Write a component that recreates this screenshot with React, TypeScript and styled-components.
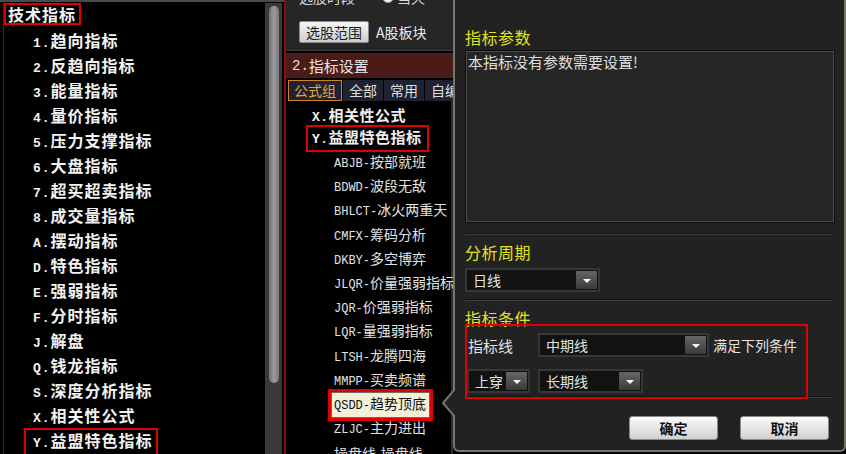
import React from "react";
import styled, { createGlobalStyle } from "styled-components";

const GlobalStyle = createGlobalStyle`
  html, body { margin: 0; padding: 0; background: #000; }
  body {
    width: 846px; height: 454px; overflow: hidden;
    font-family: "Noto Sans CJK SC", "Noto Sans", sans-serif;
  }
  #root { width: 846px; height: 454px; }
  * { box-sizing: border-box; }
`;

const Screen = styled.div`
  display: flex;
  width: 846px;
  height: 454px;
  overflow: hidden;
  background: #000;
`;

const Code = styled.span<{ $size?: number; $bold?: boolean }>`
  font-family: "Liberation Mono", monospace;
  font-size: ${(p) => p.$size ?? 12}px;
  font-weight: ${(p) => (p.$bold ? 700 : 400)};
`;

/* ---------------- Left panel ---------------- */
const LeftPanel = styled.div`
  width: 284px;
  flex: none;
  display: flex;
  flex-direction: column;
  background: #000;
`;

const TopStrip = styled.div`
  height: 2px;
  flex: none;
  background: #4a4a4a;
`;

const LeftBody = styled.div`
  flex: 1;
  min-height: 0;
  display: flex;
  padding: 0 2px 0 3px;
`;

const TreeColumn = styled.div`
  flex: 1;
  display: flex;
  flex-direction: column;
  border-left: 1px solid #7a0808;
`;

const TreeHeader = styled.div`
  align-self: flex-start;
  margin-top: 1px;
  border: 2px solid #e00000;
  padding: 0 3px 0 2px;
  line-height: 18px;
  font-size: 16px;
  font-weight: 700;
  letter-spacing: 1px;
  color: #f2f2f2;
  white-space: nowrap;
`;

const TreeList = styled.div`
  margin-top: 4.5px;
  display: flex;
  flex-direction: column;
`;

const TreeRow = styled.div`
  height: 25px;
  flex: none;
  display: flex;
  align-items: center;
  padding-left: 20px;
`;

const TreeLabel = styled.span<{ $boxed?: boolean }>`
  border: 2px solid ${(p) => (p.$boxed ? "#e00000" : "transparent")};
  padding: 0 3px 0 7px;
  line-height: 20px;
  font-size: 16px;
  font-weight: 700;
  letter-spacing: 1px;
  color: #f2f2f2;
  white-space: nowrap;
`;

const ScrollTrack = styled.div`
  width: 17px;
  flex: none;
  margin-top: 1px;
  padding-top: 3px;
  background: #3a3a3a;
  display: flex;
  justify-content: center;
`;

const ScrollThumb = styled.div`
  width: 10px;
  height: 377px;
  border-radius: 5px;
  background: linear-gradient(90deg, #6f6f6f, #9c9c9c 50%, #777);
`;

/* ---------------- Middle panel ---------------- */
const MiddlePanel = styled.div`
  width: 169px;
  flex: none;
  display: flex;
  flex-direction: column;
  border-left: 2px solid #8a0c0c;
  overflow: hidden;
  background: #000;
`;

const MidTop = styled.div`
  height: 51px;
  flex: none;
  background: #262626;
  border-bottom: 1px solid #3a3a3a;
  padding-left: 13px;
  display: flex;
  flex-direction: column;
  overflow: hidden;
`;

const CutRow = styled.div`
  margin-top: -11px;
  height: 16px;
  flex: none;
  display: flex;
  align-items: center;
  font-size: 14px;
  line-height: 16px;
  color: #dcdcdc;
  white-space: nowrap;
`;

const Radio = styled.span`
  width: 12px;
  height: 12px;
  border-radius: 50%;
  background: #f4f4f4;
  border: 1px solid #999;
  margin: 0 3px 0 27px;
  flex: none;
`;

const ButtonRow = styled.div`
  margin-top: 16px;
  display: flex;
  align-items: center;
`;

const LightButton = styled.button`
  height: 22px;
  padding: 0 6px;
  border: 1px solid #8a8a8a;
  border-radius: 2px;
  background: linear-gradient(#f6f6f6, #cdcdcd);
  color: #1a1a1a;
  font-family: inherit;
  font-size: 14px;
  line-height: 20px;
`;

const PlainText = styled.span`
  margin-left: 7px;
  font-size: 14px;
  color: #ededed;
  white-space: nowrap;
`;

const SectionBand = styled.div`
  margin-top: 2px;
  height: 25px;
  flex: none;
  background: #4b1c17;
  padding-left: 6px;
  display: flex;
  align-items: center;
  font-size: 15px;
  color: #e6e6e6;
  white-space: nowrap;
`;

const Tabs = styled.div`
  margin-top: 2px;
  display: flex;
  gap: 1px;
  padding-left: 2px;
  flex: none;
`;

const Tab = styled.div<{ $active?: boolean }>`
  height: 21px;
  flex: none;
  padding: 0 5px;
  border: 1px solid ${(p) => (p.$active ? "#d2821e" : "transparent")};
  background: #1e2231;
  color: ${(p) => (p.$active ? "#f0a030" : "#dedede")};
  font-size: 14px;
  line-height: 19px;
  white-space: nowrap;
`;

const FormulaList = styled.div`
  flex: 1;
  padding-top: 4px;
  display: flex;
  flex-direction: column;
  border-right: 2px solid #2e2e2e;
`;

const GroupRow = styled.div`
  height: 22px;
  flex: none;
  display: flex;
  align-items: center;
  padding-left: 20px;
`;

const GroupLabel = styled.span<{ $boxed?: boolean }>`
  border: 2px solid ${(p) => (p.$boxed ? "#e00000" : "transparent")};
  padding: 0 5px 0 4px;
  line-height: 20px;
  font-size: 15px;
  font-weight: 700;
  letter-spacing: 0.5px;
  color: #f0f0f0;
  white-space: nowrap;
`;

const SubList = styled.div`
  margin-top: 2px;
  display: flex;
  flex-direction: column;
`;

const SubRow = styled.div`
  height: 24.2px;
  flex: none;
  display: flex;
  align-items: center;
  padding-left: 42px;
`;

const SubLabel = styled.span<{ $selected?: boolean }>`
  border: 3px solid ${(p) => (p.$selected ? "#e00000" : "transparent")};
  padding: 0 4px 0 3px;
  line-height: 23px;
  font-size: 14px;
  white-space: nowrap;
  color: ${(p) => (p.$selected ? "#111" : "#e2e2e2")};
  background: ${(p) => (p.$selected ? "#f3f0da" : "transparent")};
  box-shadow: ${(p) => (p.$selected ? "inset 0 0 0 1px #6a6a6a" : "none")};
`;

/* ---------------- Dialog ---------------- */
const Dialog = styled.div`
  position: relative;
  width: 393px;
  height: 452px;
  flex: none;
  background: #222;
  border: 2px solid #7b7468;
  border-top: none;
  border-radius: 0 0 6px 6px;
  padding: 0 9px 0 10px;
  display: flex;
  flex-direction: column;
`;

const Pointer = styled.svg`
  position: absolute;
  left: -14px;
  top: 389px;
`;

const DialogTitle = styled.div<{ $top: number }>`
  margin-top: ${(p) => p.$top}px;
  line-height: 20px;
  font-size: 16px;
  letter-spacing: 0.5px;
  color: #e6e31e;
  white-space: nowrap;
`;

const ParamBox = styled.div`
  margin-top: 3px;
  height: 173px;
  border: 1px solid #0e0e0e;
  box-shadow: inset 0 0 0 1px #4a4a4a;
  background: #262626;
  padding: 2px 2px;
  font-size: 15px;
  line-height: 18px;
  color: #dedede;
`;

const Divider = styled.div<{ $top: number }>`
  margin-top: ${(p) => p.$top}px;
  margin-right: 3px;
  height: 2px;
  flex: none;
  border-top: 1px solid #141414;
  border-bottom: 1px solid #3b3b3b;
`;

const Select = styled.div<{ $w: number; $top?: number }>`
  width: ${(p) => p.$w}px;
  height: 24px;
  flex: none;
  margin-top: ${(p) => p.$top ?? 0}px;
  display: flex;
  align-items: center;
  border: 2px solid #363636;
  background: #121212;
  padding: 0 1px 0 6px;
`;

const SelectValue = styled.span`
  flex: 1;
  font-size: 14px;
  color: #e2e2e2;
  white-space: nowrap;
`;

const SelectArrow = styled.span`
  width: 21px;
  height: 18px;
  flex: none;
  border-radius: 1px;
  background: linear-gradient(#666, #3a3a3a);
  display: flex;
  align-items: center;
  justify-content: center;
  &::after {
    content: "";
    margin-top: 2px;
    border-left: 4px solid transparent;
    border-right: 4px solid transparent;
    border-top: 4px solid #fff;
  }
`;

const CondBox = styled.div`
  position: relative;
  z-index: 1;
  margin-top: -4px;
  width: 343px;
  height: 75px;
  flex: none;
  border: 2px solid #e00000;
  padding-top: 7px;
  display: flex;
  flex-direction: column;
`;

const CondRow = styled.div<{ $top?: number }>`
  margin-top: ${(p) => p.$top ?? 0}px;
  display: flex;
  align-items: center;
  gap: 8px;
`;

const CondLabel = styled.span`
  width: 63px;
  padding-left: 1px;
  font-size: 15px;
  color: #e2e2e2;
  white-space: nowrap;
`;

const CondText = styled.span`
  margin-left: -4px;
  font-size: 14px;
  color: #e2e2e2;
  white-space: nowrap;
`;

const Actions = styled.div`
  margin-top: 18px;
  margin-right: 6px;
  display: flex;
  justify-content: flex-end;
  gap: 22px;
`;

const ActionButton = styled.button`
  width: 89px;
  height: 24px;
  border: 1px solid #8a8a8a;
  border-radius: 3px;
  background: linear-gradient(#fbfbfb, #d0d0d0);
  color: #111;
  font-family: inherit;
  font-size: 14px;
  font-weight: 700;
  line-height: 20px;
`;

const Dropdown = ({ w, value, top }: { w: number; value: string; top?: number }) => (
  <Select $w={w} $top={top}>
    <SelectValue>{value}</SelectValue>
    <SelectArrow />
  </Select>
);

const leftItems: [string, string][] = [
  ["1.", "趋向指标"],
  ["2.", "反趋向指标"],
  ["3.", "能量指标"],
  ["4.", "量价指标"],
  ["5.", "压力支撑指标"],
  ["6.", "大盘指标"],
  ["7.", "超买超卖指标"],
  ["8.", "成交量指标"],
  ["A.", "摆动指标"],
  ["D.", "特色指标"],
  ["E.", "强弱指标"],
  ["F.", "分时指标"],
  ["J.", "解盘"],
  ["Q.", "钱龙指标"],
  ["S.", "深度分析指标"],
  ["X.", "相关性公式"],
  ["Y.", "益盟特色指标"],
];

const subItems: [string, string][] = [
  ["ABJB-", "按部就班"],
  ["BDWD-", "波段无敌"],
  ["BHLCT-", "冰火两重天"],
  ["CMFX-", "筹码分析"],
  ["DKBY-", "多空博弈"],
  ["JLQR-", "价量强弱指标"],
  ["JQR-", "价强弱指标"],
  ["LQR-", "量强弱指标"],
  ["LTSH-", "龙腾四海"],
  ["MMPP-", "买卖频谱"],
  ["QSDD-", "趋势顶底"],
  ["ZLJC-", "主力进出"],
  ["", "操盘线-操盘线"],
];

export default function App() {
  return (
    <>
      <GlobalStyle />
      <Screen>
        <LeftPanel>
          <TopStrip />
          <LeftBody>
            <TreeColumn>
              <TreeHeader>技术指标</TreeHeader>
              <TreeList>
                {leftItems.map(([code, name]) => (
                  <TreeRow key={code}>
                    <TreeLabel $boxed={code === "Y."}>
                      <Code $size={13} $bold>
                        {code}
                      </Code>
                      {name}
                    </TreeLabel>
                  </TreeRow>
                ))}
              </TreeList>
            </TreeColumn>
            <ScrollTrack>
              <ScrollThumb />
            </ScrollTrack>
          </LeftBody>
        </LeftPanel>

        <MiddlePanel>
          <MidTop>
            <CutRow>
              选股时段
              <Radio />
              当天
              <Radio />
            </CutRow>
            <ButtonRow>
              <LightButton>选股范围</LightButton>
              <PlainText>A股板块</PlainText>
            </ButtonRow>
          </MidTop>
          <SectionBand>
            <Code $size={14}>2.</Code>指标设置
          </SectionBand>
          <Tabs>
            <Tab $active>公式组</Tab>
            <Tab>全部</Tab>
            <Tab>常用</Tab>
            <Tab>自编</Tab>
          </Tabs>
          <FormulaList>
            <GroupRow>
              <GroupLabel>
                <Code $size={13} $bold>
                  X.
                </Code>
                相关性公式
              </GroupLabel>
            </GroupRow>
            <GroupRow>
              <GroupLabel $boxed>
                <Code $size={13} $bold>
                  Y.
                </Code>
                益盟特色指标
              </GroupLabel>
            </GroupRow>
            <SubList>
              {subItems.map(([code, name]) => (
                <SubRow key={code + name}>
                  <SubLabel $selected={code === "QSDD-"}>
                    {code && <Code>{code}</Code>}
                    {name}
                  </SubLabel>
                </SubRow>
              ))}
            </SubList>
          </FormulaList>
        </MiddlePanel>

        <Dialog>
          <Pointer width="14" height="28" viewBox="0 0 14 28">
            <polygon points="14,0 2,14 14,28" fill="#222" />
            <polyline points="14,0 2,14 14,28" fill="none" stroke="#7b7468" strokeWidth="2" />
          </Pointer>
          <DialogTitle $top={27}>指标参数</DialogTitle>
          <ParamBox>本指标没有参数需要设置!</ParamBox>
          <Divider $top={10} />
          <DialogTitle $top={7}>分析周期</DialogTitle>
          <Dropdown w={135} value="日线" top={6} />
          <Divider $top={7} />
          <DialogTitle $top={7}>指标条件</DialogTitle>
          <CondBox>
            <CondRow>
              <CondLabel>指标线</CondLabel>
              <Dropdown w={171} value="中期线" />
              <CondText>满足下列条件</CondText>
            </CondRow>
            <CondRow $top={12}>
              <Dropdown w={63} value="上穿" />
              <Dropdown w={105} value="长期线" />
            </CondRow>
          </CondBox>
          <Divider $top={-3} />
          <Actions>
            <ActionButton>确定</ActionButton>
            <ActionButton>取消</ActionButton>
          </Actions>
        </Dialog>
      </Screen>
    </>
  );
}
